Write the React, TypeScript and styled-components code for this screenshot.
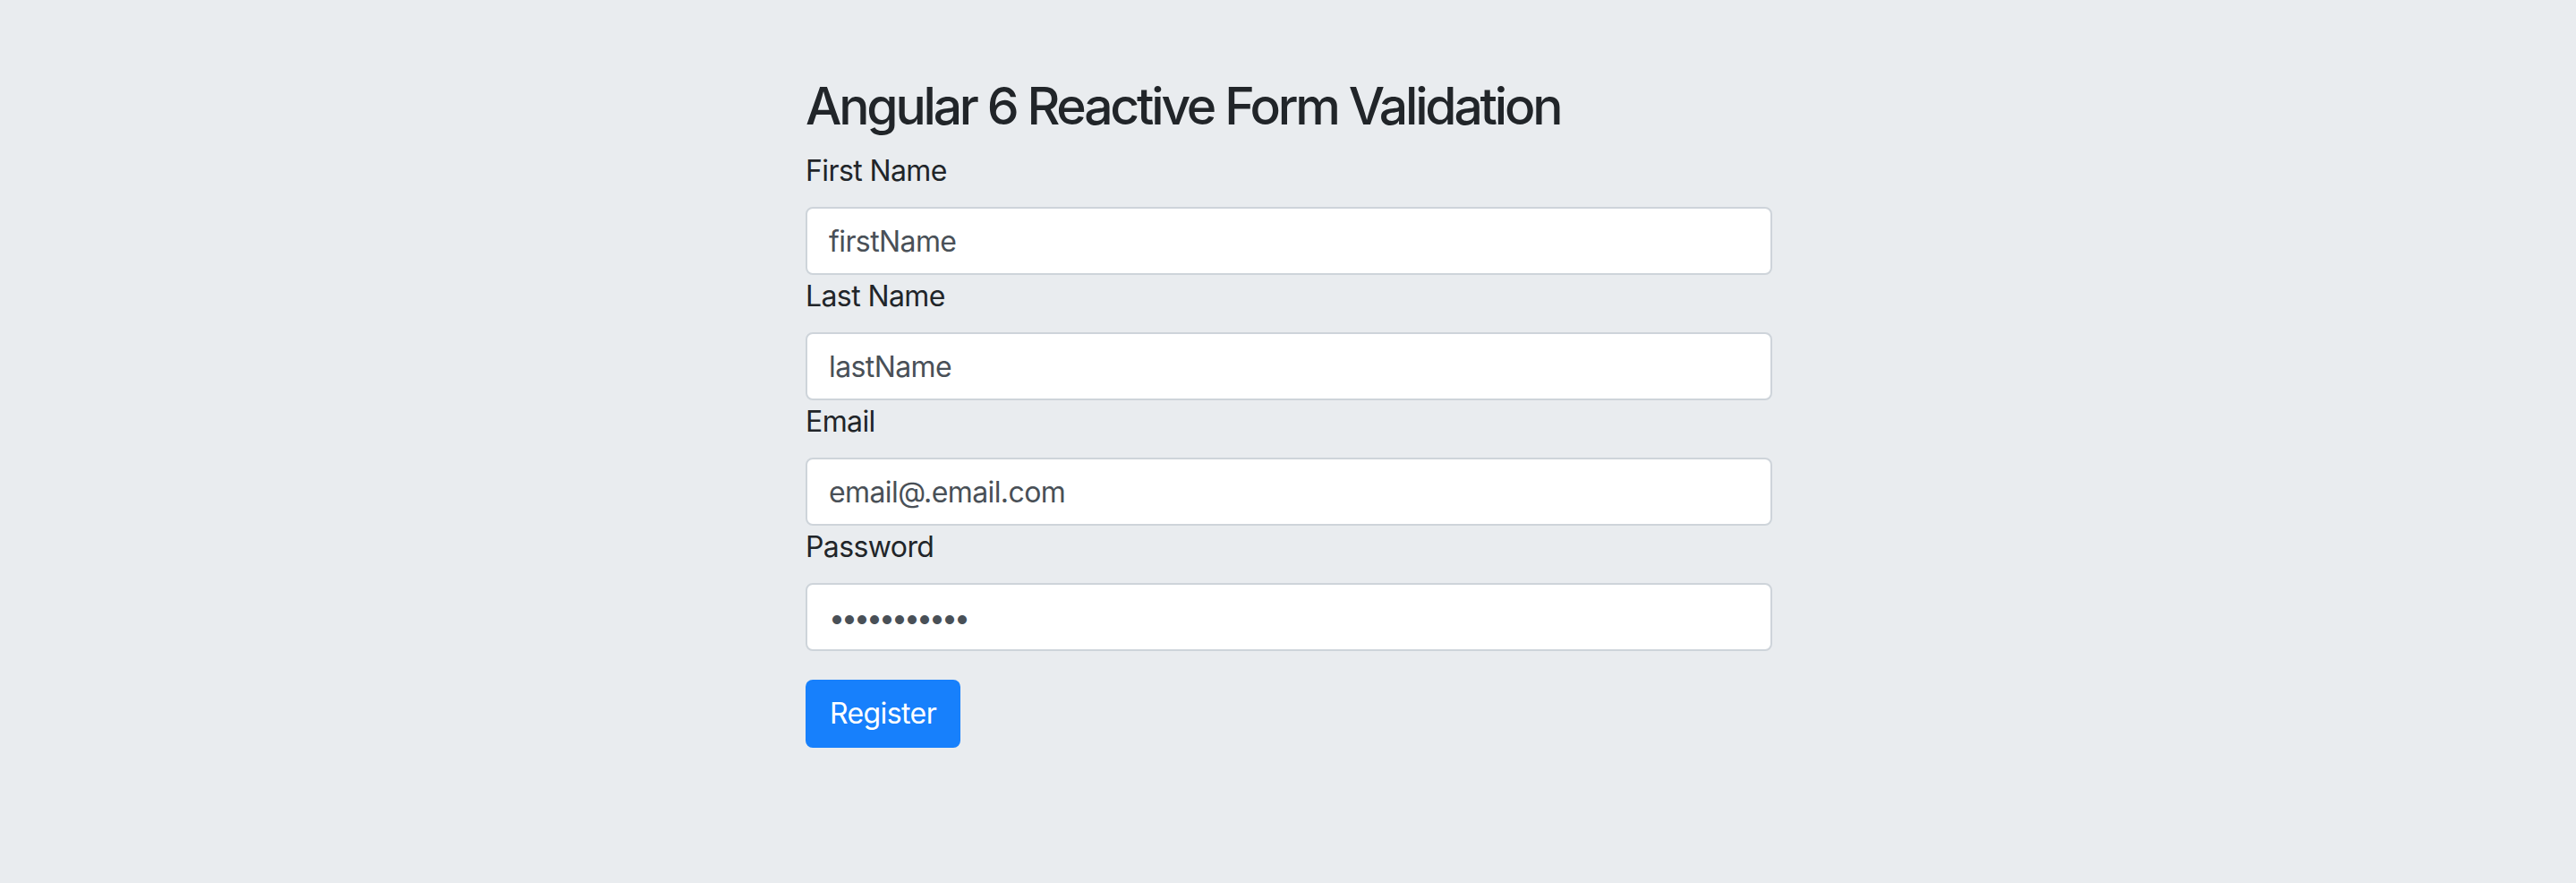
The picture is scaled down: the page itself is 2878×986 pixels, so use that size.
import React from "react";
import styled, { createGlobalStyle } from "styled-components";

const Global = createGlobalStyle`
  html, body { margin: 0; padding: 0; background: #e9ecef; }
  body { font-family: Inter, "Noto Sans", "Liberation Sans", sans-serif; color: #212529; }
  * { box-sizing: border-box; }
`;

const Page = styled.div`
  min-height: 986px;
  background: #e9ecef;
  display: flex;
  justify-content: center;
  padding-top: 81px;
`;

const Column = styled.form`
  width: 1080px;
  margin-left: 2px;
  display: flex;
  flex-direction: column;
`;

const Title = styled.h2`
  margin: 0 0 13px;
  padding-top: 3px;
  font-size: 57px;
  line-height: 70px;
  font-weight: 500;
  color: #212529;
  letter-spacing: -3.2px;
`;

const Group = styled.div`
  display: flex;
  flex-direction: column;
`;

const Label = styled.label`
  font-size: 32px;
  line-height: 48px;
  margin-bottom: 16px;
  color: #212529;
  letter-spacing: -0.6px;
`;

const Input = styled.input`
  height: 76px;
  width: 100%;
  padding: 12px 24px;
  font-family: inherit;
  font-size: 32px;
  line-height: 48px;
  color: #495057;
  background: #fff;
  border: 2px solid #ced4da;
  border-radius: 8px;
  outline: none;
  letter-spacing: -0.6px;
  &[type="password"] { letter-spacing: -4px; }
`;

const Button = styled.button`
  align-self: flex-start;
  margin-top: 32px;
  height: 76px;
  padding: 12px 25px;
  font-family: inherit;
  font-size: 32px;
  line-height: 48px;
  letter-spacing: -0.6px;
  color: #fff;
  background: #1780fc;
  border: 2px solid #1780fc;
  border-radius: 8px;
  cursor: pointer;
`;

const fields = [
  { label: "First Name", value: "firstName", type: "text" },
  { label: "Last Name", value: "lastName", type: "text" },
  { label: "Email", value: "email@.email.com", type: "text" },
  { label: "Password", value: "password123", type: "password" },
];

export default function App() {
  return (
    <>
      <Global />
      <Page>
        <Column onSubmit={(e) => e.preventDefault()}>
          <Title>Angular 6 Reactive Form Validation</Title>
          {fields.map((f) => (
            <Group key={f.label}>
              <Label>{f.label}</Label>
              <Input type={f.type} defaultValue={f.value} />
            </Group>
          ))}
          <Button type="submit">Register</Button>
        </Column>
      </Page>
    </>
  );
}
